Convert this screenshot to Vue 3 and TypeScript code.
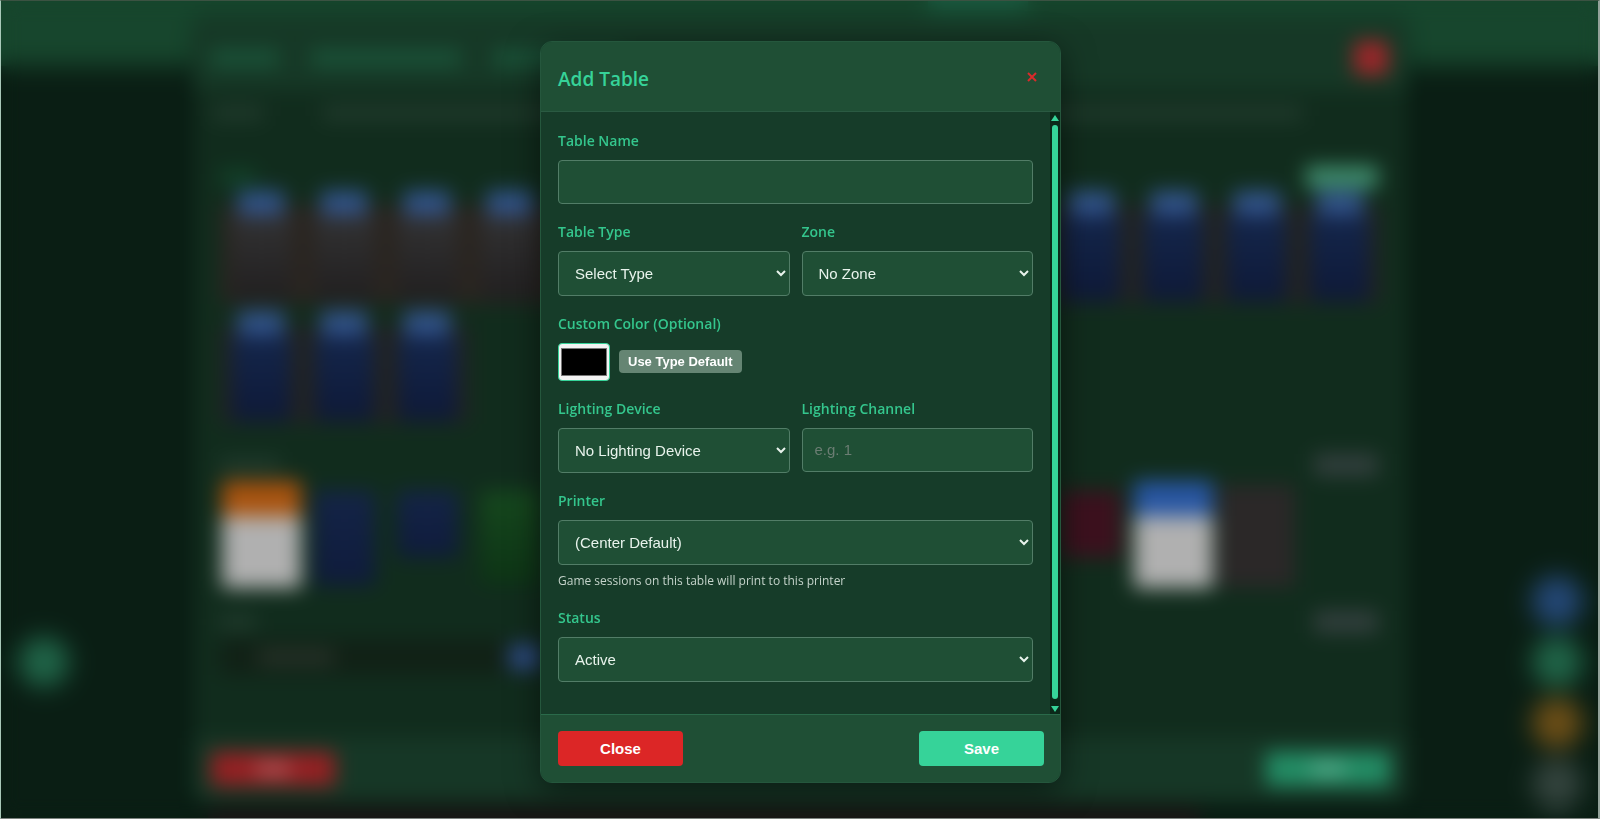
<script setup lang="ts">
import { ref } from 'vue'

interface Tile {
  kind: string
}

const tableName = ref('')
const tableType = ref('')
const zone = ref('')
const color = ref('#000000')
const lightingDevice = ref('')
const lightingChannel = ref('')
const printer = ref('')
const status = ref('active')

const tiles: Tile[] = Array.from({ length: 17 }, (_, i) => ({
  kind: i < 7 ? 'gray' : 'navy',
}))

const stations: Tile[] = [
  'orange', 'navy', 'navy short', 'green', 'navy', 'navy', 'gray',
  'navy', 'navy', 'navy', 'maroon short', 'blue', 'gray',
].map((kind) => ({ kind }))
</script>

<template>
  <div class="app">
    <div class="page" aria-hidden="true">
      <div class="topbar"><span class="nav-pill"></span></div>
      <div class="bottombar"></div>
      <div class="fabs left"><span class="fab mint"></span></div>
      <div class="fabs right">
        <span class="fab sky"></span>
        <span class="fab mint"></span>
        <span class="fab amber"></span>
        <span class="fab slate"></span>
      </div>
    </div>

    <div class="overlay outer" aria-hidden="true">
      <div class="board">
        <div class="board-head">
          <span class="bar title-a"></span>
          <span class="bar title-b"></span>
          <span class="bar title-c"></span>
          <span class="board-close"></span>
        </div>
        <div class="board-body">
          <div class="tabs"><span class="bar tab-a"></span><span class="bar tab-b"></span></div>
          <div class="section-head first">
            <span class="bar caption lit"></span><span class="pill add"></span>
          </div>
          <div class="tiles">
            <div v-for="(t, i) in tiles" :key="i" class="tile" :class="t.kind"><span class="tag"></span></div>
          </div>
          <div class="section-head">
            <span class="bar caption"></span><span class="pill"></span>
          </div>
          <div class="stations">
            <div v-for="(s, i) in stations" :key="i" class="station" :class="s.kind"></div>
          </div>
          <div class="section-head last">
            <span class="bar caption short-bar"></span><span class="pill"></span>
          </div>
          <div class="queue"><span class="bar queue-name"></span><span class="queue-pill"></span></div>
        </div>
        <div class="board-foot">
          <span class="foot-red"><span class="foot-label"></span></span>
          <span class="foot-green"><span class="foot-label"></span></span>
        </div>
      </div>
    </div>

    <div class="overlay inner">
      <form class="modal" role="dialog" aria-labelledby="modal-title" @submit.prevent>
        <header class="modal-head">
          <h2 id="modal-title">Add Table</h2>
          <button type="button" class="x" aria-label="Close dialog">
            <svg viewBox="0 0 10 10" width="10" height="10"><path d="M1 1 L9 9 M9 1 L1 9" /></svg>
          </button>
        </header>

        <div class="modal-body">
          <div class="fields">
            <div class="field">
              <label for="table-name">Table Name</label>
              <input id="table-name" v-model="tableName" type="text" class="control" />
            </div>
            <div class="row">
              <div class="field">
                <label for="table-type">Table Type</label>
                <select id="table-type" v-model="tableType" class="control">
                  <option value="">Select Type</option>
                </select>
              </div>
              <div class="field">
                <label for="zone">Zone</label>
                <select id="zone" v-model="zone" class="control">
                  <option value="">No Zone</option>
                </select>
              </div>
            </div>
            <div class="field">
              <label for="color">Custom Color (Optional)</label>
              <div class="color-row">
                <input id="color" v-model="color" type="color" class="swatch" />
                <button type="button" class="use-default">Use Type Default</button>
              </div>
            </div>
            <div class="row">
              <div class="field">
                <label for="device">Lighting Device</label>
                <select id="device" v-model="lightingDevice" class="control">
                  <option value="">No Lighting Device</option>
                </select>
              </div>
              <div class="field">
                <label for="channel">Lighting Channel</label>
                <input id="channel" v-model="lightingChannel" type="text" class="control" placeholder="e.g. 1" />
              </div>
            </div>
            <div class="field">
              <label for="printer">Printer</label>
              <select id="printer" v-model="printer" class="control" aria-describedby="printer-hint">
                <option value="">(Center Default)</option>
              </select>
              <p id="printer-hint" class="hint">Game sessions on this table will print to this printer</p>
            </div>
            <div class="field">
              <label for="status">Status</label>
              <select id="status" v-model="status" class="control">
                <option value="active">Active</option>
              </select>
            </div>
          </div>
          <div class="scroll" aria-hidden="true">
            <svg viewBox="0 0 8 6" width="8" height="6"><path d="M4 0 L8 6 H0 Z" /></svg>
            <span class="thumb"></span>
            <svg viewBox="0 0 8 6" width="8" height="6"><path d="M0 0 H8 L4 6 Z" /></svg>
          </div>
        </div>

        <footer class="modal-foot">
          <button type="button" class="btn close">Close</button>
          <button type="submit" class="btn save">Save</button>
        </footer>
      </form>
    </div>
    <div class="frame" aria-hidden="true"></div>
  </div>
</template>

<style>
html,
body {
  background: #0a1e14;
  overflow: hidden;
}
</style>

<style scoped>
* {
  box-sizing: border-box;
}
.app {
  position: relative;
  height: 100vh;
  overflow: hidden;
  font-family: "Segoe UI", "Open Sans", "Noto Sans", sans-serif;
}
.page {
  height: 100%;
  display: flex;
  flex-direction: column;
  justify-content: space-between;
  background: #0a1e14;
}
.topbar {
  height: 66px;
  background: #17462d;
}
.bottombar {
  width: 62%;
  height: 14px;
  margin-left: 13%;
  background: #1c1716;
}
.nav-pill {
  display: block;
  width: 100px;
  height: 14px;
  margin-left: 58%;
  background: #1b5a40;
}
.fabs {
  position: absolute;
  bottom: 10px;
  display: flex;
  flex-direction: column;
  gap: 11px;
}
.fabs.left {
  left: 19px;
  bottom: 132px;
}
.fabs.right {
  right: 18px;
}
.fab {
  width: 50px;
  height: 50px;
  border-radius: 50%;
}
.mint { background: #206649; }
.sky { background: #244878; }
.amber { background: #6e4f16; }
.slate { background: #34443e; }

.overlay {
  position: absolute;
  inset: 0;
  display: grid;
  place-items: center;
  padding-left: 1px;
}
.outer {
  backdrop-filter: blur(8px);
}
.inner {
  padding-top: 4px;
  backdrop-filter: blur(10px);
}
.frame {
  position: absolute;
  inset: 0;
  border: 1px solid #7c837f;
  border-top-color: #3b5242;
  border-left-color: #a9c9b9;
  border-right: 2px solid #93a29a;
  pointer-events: none;
}

.board {
  width: 76%;
  height: 784px;
  display: flex;
  flex-direction: column;
  background: #112c1d;
  border-radius: 12px;
  overflow: hidden;
  box-shadow: 0 4px 20px rgba(0, 0, 0, 0.15);
}
.board-head {
  display: flex;
  align-items: center;
  height: 72px;
  padding: 8px 20px 0 18px;
  background: #163826;
}
.bar {
  height: 14px;
  background: #213b2d;
}
.title-a { width: 68px; margin-right: 32px; height: 18px; background: #1a5238; }
.title-b { width: 150px; margin-right: 32px; height: 18px; background: #1a5238; }
.title-c { width: 130px; height: 18px; background: #1a5238; }
.board-close {
  width: 34px;
  height: 34px;
  margin-left: auto;
  border-radius: 4px;
  background: #9c2629;
}
.board-body {
  flex: 1;
  display: flex;
  flex-direction: column;
  padding: 16px 27px 0;
}
.tabs {
  display: flex;
  gap: 60px;
}
.tab-a { width: 50px; margin-left: -7px; }
.tab-b { flex: 1; margin-right: 79px; }
.section-head {
  display: flex;
  justify-content: space-between;
  align-items: center;
  height: 26px;
}
.section-head.first {
  margin: 44px 0 1px;
}
.section-head.last {
  margin: 18px 0 4px;
}
.caption { width: 60px; }
.caption.lit { width: 36px; background: #12442a; }
.short-bar { width: 36px; }
.pill {
  width: 64px;
  height: 22px;
  margin-right: 3px;
  background: #323f3d;
}
.pill.add {
  width: 72px;
  background: #3f8c6c;
}
.tiles {
  display: grid;
  grid-template-columns: repeat(14, 1fr);
  row-gap: 7px;
  margin-bottom: 28px;
}
.tile {
  height: 113px;
  background: linear-gradient(transparent 14px, #212322 14px);
}
.tile::after {
  content: "";
  display: block;
  height: 86px;
  margin: 0 12px;
}
.tile.gray { background: linear-gradient(transparent 14px, #2a2520 14px); }
.tile.gray::after { background: linear-gradient(#323233, #211f20); }
.tile.navy::after { background: linear-gradient(#14264b, #0e1938); }
.tag {
  display: block;
  width: 46px;
  height: 24px;
  margin: 0 auto;
  background: #315389;
}
.stations {
  display: grid;
  grid-template-columns: repeat(14, 1fr);
  align-items: start;
  height: 110px;
  margin-top: 3px;
}
.station {
  height: 94px;
  margin: 10px 11px 0;
}
.station.short { height: 66px; }
.station.navy { background: linear-gradient(#142447, #0f1b3c); }
.station.green { background: linear-gradient(#16481e, #0d3415); }
.station.maroon { background: #3c111e; }
.station.gray { margin: 4px 3px 0; height: 102px; background: #2b2828; }
.station.orange,
.station.blue {
  height: 107px;
  margin: 0 2px;
  background: linear-gradient(#a8530f 35px, #b0b0b0 35px);
}
.station.blue { background: linear-gradient(#2856a2 35px, #b0b0b0 35px); }
.queue {
  display: flex;
  align-items: center;
  justify-content: space-between;
  width: 326px;
  height: 36px;
  padding: 0 5px 0 38px;
  background: #112116;
}
.queue-name { width: 76px; background: #29342a; }
.queue-pill { width: 32px; height: 26px; background: #2c4b80; }
.board-foot {
  display: flex;
  align-items: center;
  justify-content: space-between;
  height: 64px;
  padding: 0 18px 2px;
  background: #163726;
}
.foot-red,
.foot-green {
  display: grid;
  place-items: center;
  width: 124px;
  height: 34px;
  background: #962023;
}
.foot-green { background: #238d65; }
.foot-label {
  width: 34px;
  height: 10px;
  background: rgba(255, 255, 255, 0.3);
}

.modal {
  width: 521px;
  max-width: 100%;
  display: flex;
  flex-direction: column;
  background: #163c29;
  border: 1px solid #25573d;
  border-radius: 12px;
  overflow: hidden;
  box-shadow: 0 8px 32px rgba(0, 0, 0, 0.5);
}
.modal-head {
  display: flex;
  align-items: center;
  justify-content: space-between;
  height: 70px;
  padding: 6px 21px 0 17px;
  background: #1f4f35;
  border-bottom: 1px solid #2a5a42;
}
h2 {
  margin: 0;
  font-size: 19px;
  line-height: 28px;
  font-weight: 600;
  color: #36d399;
}
.x {
  display: grid;
  place-items: center;
  width: 14px;
  height: 20px;
  margin-bottom: 4px;
  padding: 0;
  border: 0;
  background: none;
}
.x path {
  stroke: #d92b2b;
  stroke-width: 2;
  fill: none;
}
.modal-body {
  display: flex;
}
.fields {
  flex: 1;
  display: flex;
  flex-direction: column;
  gap: 16px;
  padding: 17px 17px 32px;
}
.row {
  display: grid;
  grid-template-columns: 1fr 1fr;
  gap: 12px;
  align-items: start;
}
.field {
  display: flex;
  flex-direction: column;
}
label {
  margin-bottom: 8px;
  font-size: 14px;
  line-height: 23px;
  font-weight: 600;
  color: #34c68d;
}
.control {
  width: 100%;
  height: 45px;
  padding: 0 12px;
  border: 1px solid #527d67;
  border-radius: 4px;
  background: #1f4f35;
  color: #e8f3ec;
  font-family: Arial, "Liberation Sans", sans-serif;
  font-size: 15px;
}
input.control {
  height: 44px;
}
.control::placeholder {
  color: #6b7d73;
}
.color-row {
  display: flex;
  align-items: center;
  gap: 9px;
}
.swatch {
  width: 52px;
  height: 38px;
  padding: 0;
  border: 1px solid #36d399;
  border-radius: 4px;
  background: #f3f3f3;
}
.use-default {
  height: 23px;
  padding: 0 9px;
  border: 0;
  border-radius: 4px;
  background: #658573;
  color: #fff;
  font-family: Arial, "Liberation Sans", sans-serif;
  font-size: 13px;
  font-weight: 700;
}
.hint {
  margin: 6px 0 0;
  font-size: 12px;
  line-height: 19px;
  color: #c4d3ca;
}
.scroll {
  display: flex;
  flex-direction: column;
  align-items: center;
  width: 10px;
  padding: 3px 0 2px;
  gap: 4px;
  background: #0b2819;
}
.scroll path {
  fill: #36d399;
}
.thumb {
  flex: 1;
  width: 6px;
  margin-bottom: 3px;
  border-radius: 3px;
  background: #36d399;
}
.modal-foot {
  display: flex;
  justify-content: space-between;
  padding: 16px 16px 16px 17px;
  background: #1f4f35;
  border-top: 1px solid #2a6a4a;
}
.btn {
  width: 125px;
  height: 35px;
  border: 0;
  border-radius: 4px;
  color: #fff;
  font-family: Arial, "Liberation Sans", sans-serif;
  font-size: 15px;
  font-weight: 700;
}
.close { background: #dc2626; }
.save { background: #36d399; }
</style>
